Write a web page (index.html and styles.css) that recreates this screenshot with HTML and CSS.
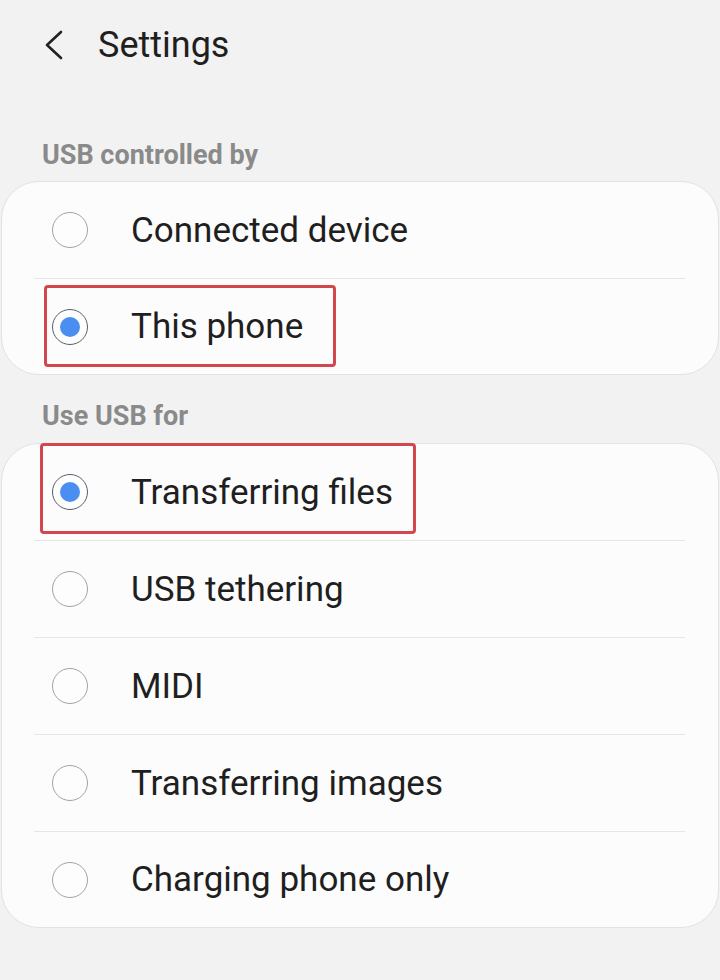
FILE: index.html
```html
<!DOCTYPE html>
<html lang="en">
<head>
<meta charset="utf-8">
<title>Settings</title>
<link rel="stylesheet" href="styles.css">
</head>
<body>
<header class="topbar">
  <svg class="back" width="24" height="32" viewBox="0 0 24 32" aria-hidden="true">
    <path d="M18 3 L4 16 L18 29" fill="none" stroke="#222" stroke-width="2.6" stroke-linecap="round" stroke-linejoin="round"/>
  </svg>
  <h1 class="title">Settings</h1>
</header>

<h2 class="label label-first">USB controlled by</h2>
<section class="card">
  <div class="row"><span class="radio"></span><span class="text">Connected device</span></div>
  <div class="row"><span class="radio on"></span><span class="text">This phone</span><span class="mark mark-a"></span></div>
</section>

<h2 class="label label-second">Use USB for</h2>
<section class="card">
  <div class="row"><span class="radio on"></span><span class="text">Transferring files</span><span class="mark mark-b"></span></div>
  <div class="row"><span class="radio"></span><span class="text">USB tethering</span></div>
  <div class="row"><span class="radio"></span><span class="text">MIDI</span></div>
  <div class="row"><span class="radio"></span><span class="text">Transferring images</span></div>
  <div class="row"><span class="radio"></span><span class="text">Charging phone only</span></div>
</section>
</body>
</html>
```

FILE: styles.css
```css
* { box-sizing: border-box; }

html, body {
  margin: 0;
  padding: 0;
  background: #f2f2f2;
  font-family: Roboto, "Liberation Sans", sans-serif;
  color: #1f1f1f;
}

.topbar {
  height: 92px;
  display: flex;
  align-items: center;
  padding-left: 43px;
  padding-bottom: 2px;
}

.back {
  display: block;
  margin-right: 31px;
}

.title {
  margin: 0;
  font-size: 36px;
  font-weight: 400;
  color: #1f1f1f;
}

.label {
  margin: 0;
  padding-left: 42px;
  font-size: 27px;
  line-height: 30px;
  font-weight: 700;
  color: #8a8a8a;
}

.label-first { margin-top: 48px; margin-bottom: 11px; }
.label-second { margin-top: 26px; margin-bottom: 12px; }

.card {
  margin: 0 1px;
  background: #fcfcfc;
  border: 1px solid #e2e2e2;
  border-radius: 38px;
}

.row {
  position: relative;
  height: 96px;
  display: flex;
  align-items: center;
  padding-left: 50px;
}

.card .row:last-child { height: 95px; }

.row + .row::before {
  content: "";
  position: absolute;
  top: -1px;
  left: 32px;
  right: 33px;
  height: 1px;
  background: #e6e6e6;
}

.row + .row { margin-top: 1px; }

.radio {
  flex: none;
  width: 36px;
  height: 36px;
  border-radius: 50%;
  border: 1px solid #a2a2a2;
  background: #fdfdfd;
  margin-right: 43px;
  display: flex;
  align-items: center;
  justify-content: center;
}

.radio.on {
  border-color: #55606c;
}

.radio.on::after {
  content: "";
  width: 20px;
  height: 20px;
  border-radius: 50%;
  background: #4a8ef2;
}

.text {
  font-size: 35px;
  font-weight: 400;
  color: #1f1f1f;
}

.mark {
  position: absolute;
  border: 3px solid #d1474d;
  border-radius: 4px;
  pointer-events: none;
}

.mark-a {
  left: 42px;
  top: 6px;
  width: 292px;
  height: 82px;
}

.mark-b {
  left: 38px;
  top: -1px;
  width: 376px;
  height: 91px;
}
```
